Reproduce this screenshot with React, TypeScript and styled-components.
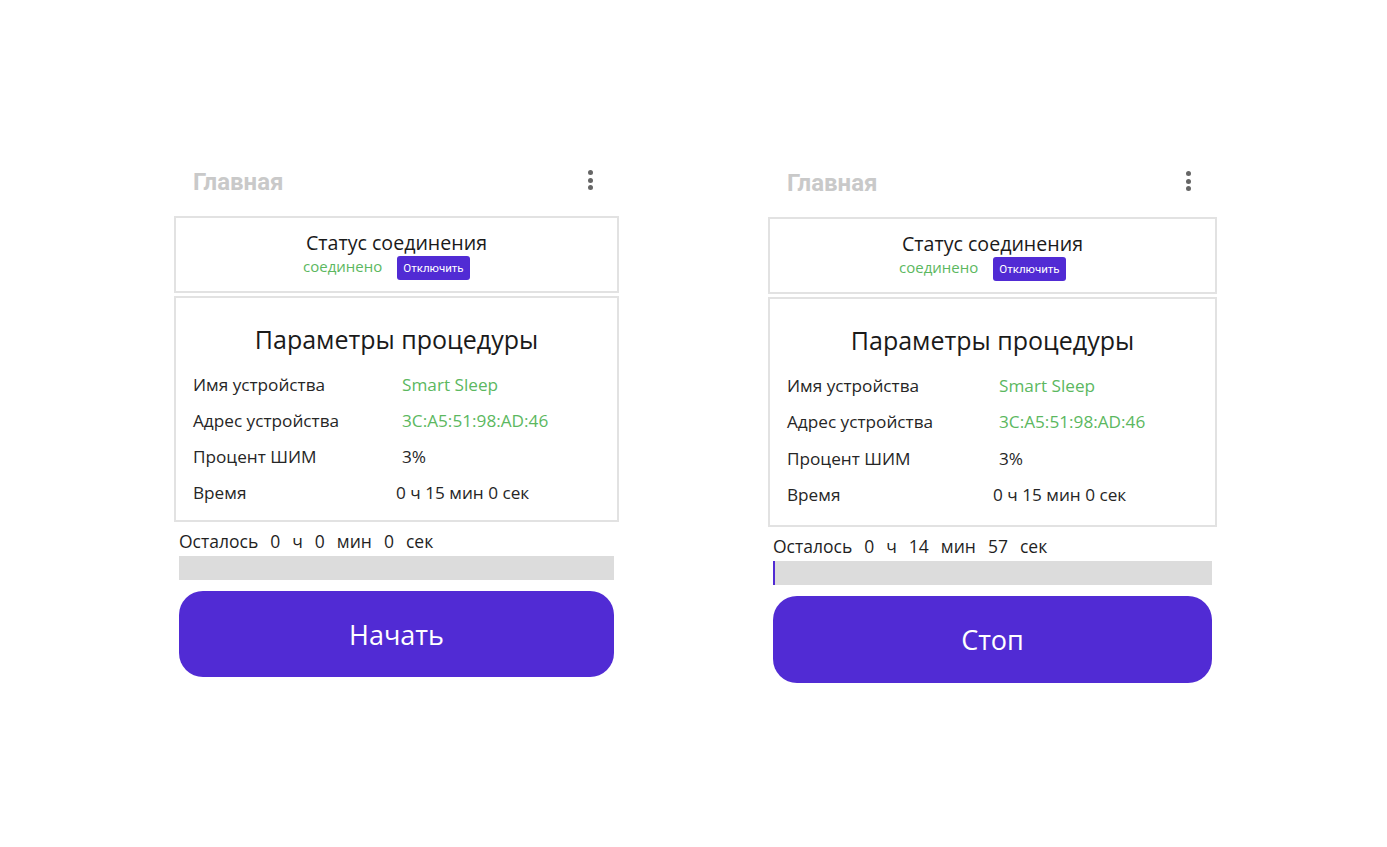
import React from 'react';
import styled, { createGlobalStyle } from 'styled-components';

const GlobalStyle = createGlobalStyle`
  html, body {
    margin: 0;
    padding: 0;
    background: #fff;
  }
  body {
    font-family: 'Open Sans', 'Noto Sans', sans-serif;
    color: #1f1f1f;
  }
`;

const Page = styled.div`
  display: flex;
  align-items: flex-start;
  gap: 149px;
  padding: 156px 0 0 174px;
  min-height: 100vh;
  box-sizing: border-box;
`;

const Screen = styled.div<{ $width: number; $offset: number }>`
  width: ${(p) => p.$width}px;
  margin-top: ${(p) => p.$offset}px;
  display: flex;
  flex-direction: column;
`;

const Toolbar = styled.div`
  height: 52px;
  margin-bottom: 8px;
  padding: 0 22px 0 19px;
  display: flex;
  align-items: center;
  justify-content: space-between;
`;

const Title = styled.div`
  font-family: Roboto, 'Liberation Sans', sans-serif;
  font-weight: 700;
  font-size: 24px;
  color: #c9c9c9;
`;

const MoreDots = styled.div`
  display: flex;
  flex-direction: column;
  gap: 2.5px;
  padding: 4px;
  margin-top: -4px;
  > span {
    width: 5px;
    height: 5px;
    border-radius: 50%;
    background: #666;
  }
`;

const Card = styled.div`
  border: 2px solid #e2e2e2;
  background: #fff;
`;

const StatusCard = styled(Card)`
  padding: 12px 0 11px;
  display: flex;
  justify-content: center;
`;

const StatusStack = styled.div`
  display: inline-flex;
  flex-direction: column;
  align-items: flex-start;
`;

const StatusTitle = styled.div`
  font-size: 19.6px;
  line-height: 26px;
  color: #1a1a1a;
`;

const StatusRow = styled.div`
  display: flex;
  align-items: center;
  gap: 15px;
  height: 24px;
  margin-left: -3px;
`;

const StatusText = styled.span`
  color: #5cb85f;
  font-size: 15px;
  margin-top: -4px;
`;

const SmallButton = styled.button`
  border: none;
  border-radius: 3px;
  background: #512bd4;
  color: #fff;
  font-family: Roboto, 'Liberation Sans', sans-serif;
  font-size: 11.5px;
  height: 24px;
  padding: 0 6px;
`;

const ParamsCard = styled(Card)<{ $bottom: number }>`
  margin-top: 3px;
  padding: 25px 0 ${(p) => p.$bottom}px 17px;
`;

const ParamsTitle = styled.div`
  text-align: center;
  font-size: 25px;
  line-height: 32px;
  margin: 0 0 11px -17px;
  color: #1a1a1a;
`;

const Row = styled.div<{ $col: number; $h: number }>`
  display: grid;
  grid-template-columns: ${(p) => p.$col}px 1fr;
  height: ${(p) => p.$h}px;
  align-items: center;
  font-size: 17.2px;
  color: #262626;
`;

const Value = styled.span<{ $shift?: number; $green?: boolean }>`
  margin-left: ${(p) => p.$shift ?? 0}px;
  color: ${(p) => (p.$green ? '#5cb85f' : '#262626')};
`;

const Remaining = styled.div`
  margin: 8px 0 0 5px;
  font-size: 17.5px;
  line-height: 22px;
  display: flex;
  gap: 12px;
  color: #1f1f1f;
`;

const Track = styled.div`
  margin: 4px 5px 0;
  height: 24px;
  background: #dcdcdc;
`;

const Fill = styled.div`
  height: 100%;
  background: #512bd4;
`;

const MainButton = styled.button<{ $h: number }>`
  margin: 11px 5px 0;
  height: ${(p) => p.$h}px;
  border: none;
  border-radius: 24px;
  background: #512bd4;
  color: #fff;
  font-family: 'Open Sans', 'Noto Sans', sans-serif;
  font-size: 27px;
`;

interface IPanel {
  width: number;
  offset: number;
  col: number;
  rowH: number;
  bottom: number;
  btnH: number;
  left: string[];
  progress: number;
  action: string;
}

const panels: IPanel[] = [
  {
    width: 445,
    offset: 0,
    col: 209,
    rowH: 36,
    bottom: 10,
    btnH: 86,
    left: ['0', 'ч', '0', 'мин', '0', 'сек'],
    progress: 0,
    action: 'Начать',
  },
  {
    width: 449,
    offset: 1,
    col: 212,
    rowH: 36.5,
    bottom: 12,
    btnH: 87,
    left: ['0', 'ч', '14', 'мин', '57', 'сек'],
    progress: 0.4,
    action: 'Стоп',
  },
];

const Phone: React.FC<{ panel: IPanel }> = ({ panel }) => {
  const { width, offset, col, rowH, bottom, btnH, left, progress, action } = panel;
  return (
    <Screen $width={width} $offset={offset}>
      <Toolbar>
        <Title>Главная</Title>
        <MoreDots>
          <span />
          <span />
          <span />
        </MoreDots>
      </Toolbar>
      <StatusCard>
        <StatusStack>
          <StatusTitle>Статус соединения</StatusTitle>
          <StatusRow>
            <StatusText>соединено</StatusText>
            <SmallButton>Отключить</SmallButton>
          </StatusRow>
        </StatusStack>
      </StatusCard>
      <ParamsCard $bottom={bottom}>
        <ParamsTitle>Параметры процедуры</ParamsTitle>
        <Row $col={col} $h={rowH}>
          <span>Имя устройства</span>
          <Value $green>Smart Sleep</Value>
        </Row>
        <Row $col={col} $h={rowH}>
          <span>Адрес устройства</span>
          <Value $green>3C:A5:51:98:AD:46</Value>
        </Row>
        <Row $col={col} $h={rowH}>
          <span>Процент ШИМ</span>
          <Value>3%</Value>
        </Row>
        <Row $col={col} $h={rowH}>
          <span>Время</span>
          <Value $shift={-6}>0 ч 15 мин 0 сек</Value>
        </Row>
      </ParamsCard>
      <Remaining>
        <span>Осталось</span>
        {left.map((part, i) => (
          <span key={i}>{part}</span>
        ))}
      </Remaining>
      <Track>
        <Fill style={{ width: `${progress}%` }} />
      </Track>
      <MainButton $h={btnH}>{action}</MainButton>
    </Screen>
  );
};

const App: React.FC = () => (
  <>
    <GlobalStyle />
    <Page>
      {panels.map((p) => (
        <Phone key={p.action} panel={p} />
      ))}
    </Page>
  </>
);

export default App;
